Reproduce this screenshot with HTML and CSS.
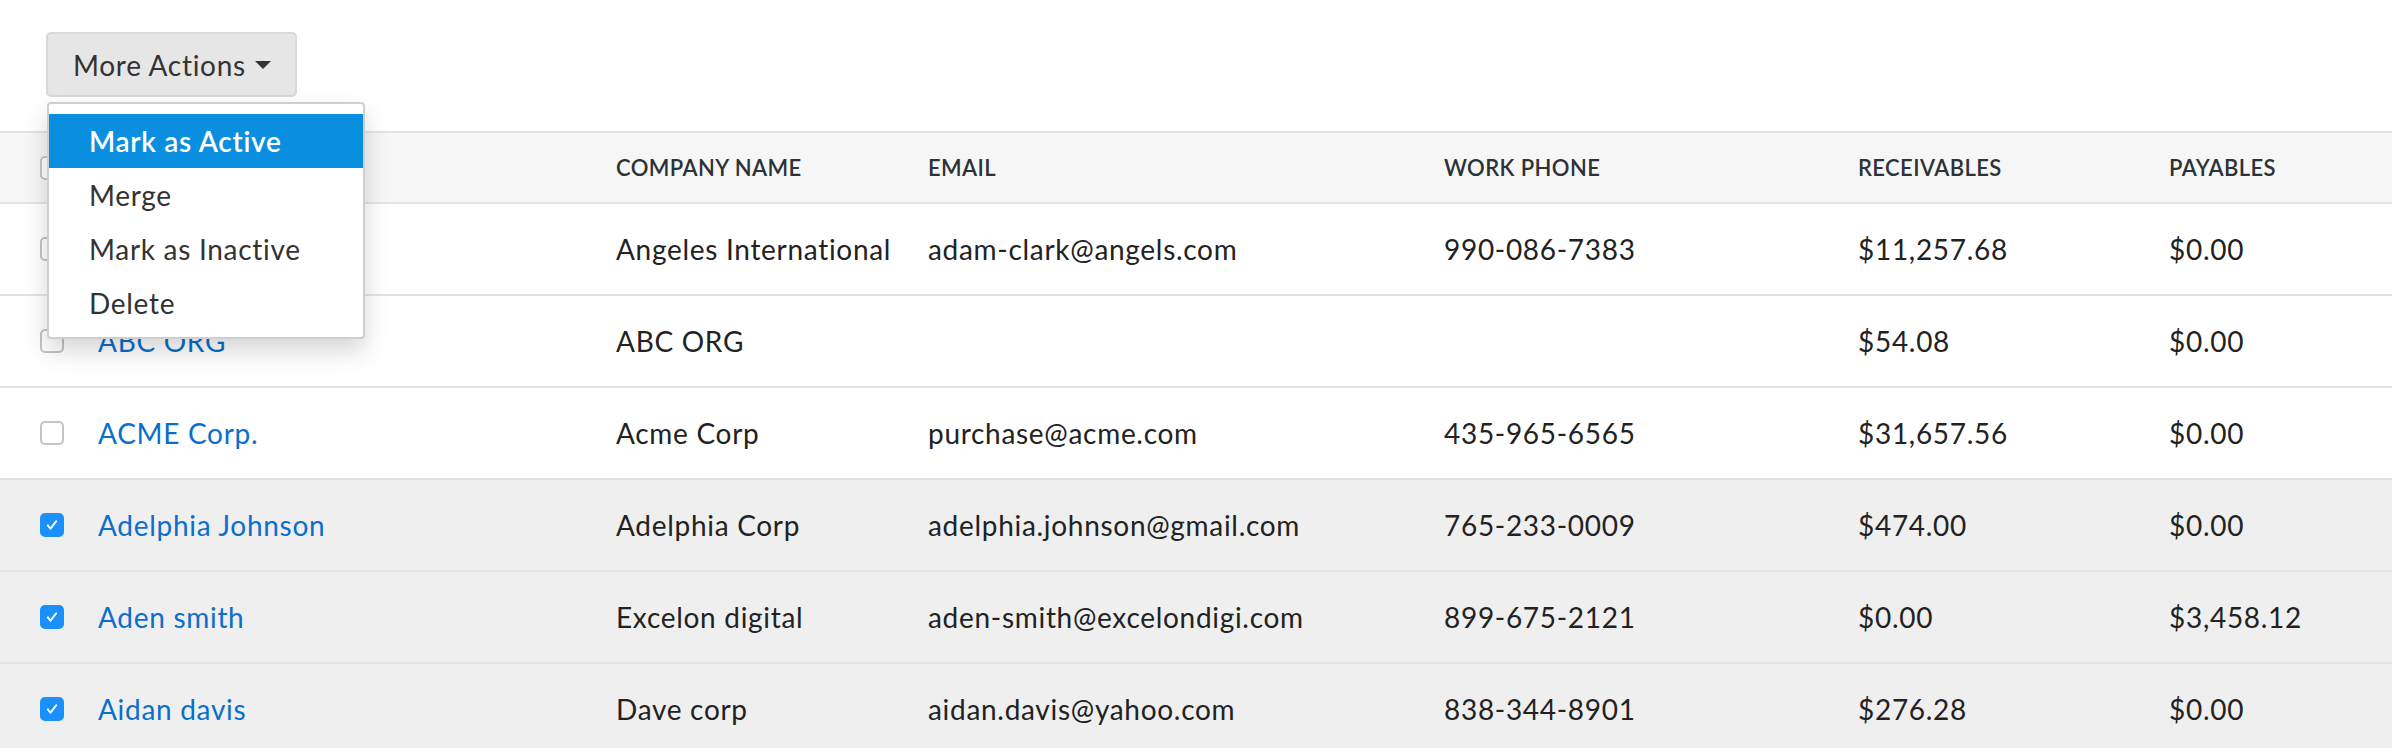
FILE: index.html
```html
<!DOCTYPE html>
<html lang="en">
  <head>
    <meta charset="UTF-8" />
    <title>Contacts</title>
    <link rel="stylesheet" href="styles.css">
  </head>
  <body>
    <div class="toolbar">
      <button class="more-btn">More Actions <span class="caret"></span></button>

      <ul class="action-menu">
        <li class="active">Mark as Active</li>
        <li>Merge</li>
        <li>Mark as Inactive</li>
        <li>Delete</li>
      </ul>
    </div>

    <div class="list">
      <div class="row head">
        <span class="check"></span>
        <div></div>
        <div>COMPANY NAME</div>
        <div>EMAIL</div>
        <div>WORK PHONE</div>
        <div>RECEIVABLES</div>
        <div>PAYABLES</div>
      </div>

      <div class="row">
        <span class="check"></span>
        <a class="name"></a>
        <div>Angeles International</div>
        <div>adam-clark@angels.com</div>
        <div>990-086-7383</div>
        <div>$11,257.68</div>
        <div>$0.00</div>
      </div>

      <div class="row">
        <span class="check"></span>
        <a class="name">ABC ORG</a>
        <div>ABC ORG</div>
        <div></div>
        <div></div>
        <div>$54.08</div>
        <div>$0.00</div>
      </div>

      <div class="row">
        <span class="check"></span>
        <a class="name">ACME Corp.</a>
        <div>Acme Corp</div>
        <div>purchase@acme.com</div>
        <div>435-965-6565</div>
        <div>$31,657.56</div>
        <div>$0.00</div>
      </div>

      <div class="row selected">
        <span class="check on"><svg viewBox="0 0 24 24"><path d="M7 12.5l3.2 4 6.8-9" /></svg></span>
        <a class="name">Adelphia Johnson</a>
        <div>Adelphia Corp</div>
        <div>adelphia.johnson@gmail.com</div>
        <div>765-233-0009</div>
        <div>$474.00</div>
        <div>$0.00</div>
      </div>

      <div class="row selected">
        <span class="check on"><svg viewBox="0 0 24 24"><path d="M7 12.5l3.2 4 6.8-9" /></svg></span>
        <a class="name">Aden smith</a>
        <div>Excelon digital</div>
        <div>aden-smith@excelondigi.com</div>
        <div>899-675-2121</div>
        <div>$0.00</div>
        <div>$3,458.12</div>
      </div>

      <div class="row selected">
        <span class="check on"><svg viewBox="0 0 24 24"><path d="M7 12.5l3.2 4 6.8-9" /></svg></span>
        <a class="name">Aidan davis</a>
        <div>Dave corp</div>
        <div>aidan.davis@yahoo.com</div>
        <div>838-344-8901</div>
        <div>$276.28</div>
        <div>$0.00</div>
      </div>
    </div>
  </body>
</html>
```

FILE: styles.css
```css
body {
  margin: 0;
  font-family: Lato, "Open Sans", sans-serif;
  color: #222;
  background: #fff;
}

.toolbar {
  position: relative;
  padding: 32px 0 34px 46px;
}

.more-btn {
  display: inline-flex;
  align-items: center;
  gap: 9px;
  height: 65px;
  padding: 0 24px 0 25px;
  font-family: inherit;
  font-size: 28px;
  letter-spacing: 0.7px;
  color: #333;
  background: #e6e6e6;
  border: 2px solid #d9d9d9;
  border-radius: 5px;
}

.caret {
  width: 0;
  height: 0;
  border-top: 8px solid #333;
  border-left: 8px solid transparent;
  border-right: 8px solid transparent;
}

.action-menu {
  position: absolute;
  top: 102px;
  left: 47px;
  z-index: 10;
  box-sizing: border-box;
  width: 318px;
  margin: 0;
  padding: 10px 0 7px;
  list-style: none;
  background: #fff;
  border: 2px solid #cfcfcf;
  border-radius: 4px;
  box-shadow: 0 12px 24px rgba(0, 0, 0, 0.16);
}

.action-menu li {
  height: 54px;
  line-height: 54px;
  padding-left: 40px;
  font-size: 28px;
  letter-spacing: 0.7px;
  color: #333;
}

.action-menu li.active {
  background: #0a8fe0;
  color: #fff;
  font-weight: 600;
}

.list {
  border-top: 2px solid #e4e4e4;
}

.row {
  display: grid;
  grid-template-columns: 58px 518px 312px 516px 414px 311px 1fr;
  align-items: center;
  height: 90px;
  padding-left: 40px;
  font-size: 28px;
  letter-spacing: 0.7px;
  border-bottom: 2px solid #e4e4e4;
}

.row.head {
  height: 69px;
  background: #f6f6f6;
  font-size: 22px;
  font-weight: 600;
  letter-spacing: 0.4px;
  color: #2c3236;
}

.row.selected {
  background: #efefef;
}

.name {
  color: #0a6ecd;
}

.check {
  display: block;
  box-sizing: border-box;
  width: 24px;
  height: 24px;
  background: #fff;
  border: 2px solid #c4c4c4;
  border-radius: 5px;
}

.check.on {
  background: #1b8ffb;
  border-color: #1b8ffb;
}

.check svg {
  display: block;
  width: 20px;
  height: 20px;
  fill: none;
  stroke: #fff;
  stroke-width: 2.4;
  stroke-linecap: round;
  stroke-linejoin: round;
}
```
